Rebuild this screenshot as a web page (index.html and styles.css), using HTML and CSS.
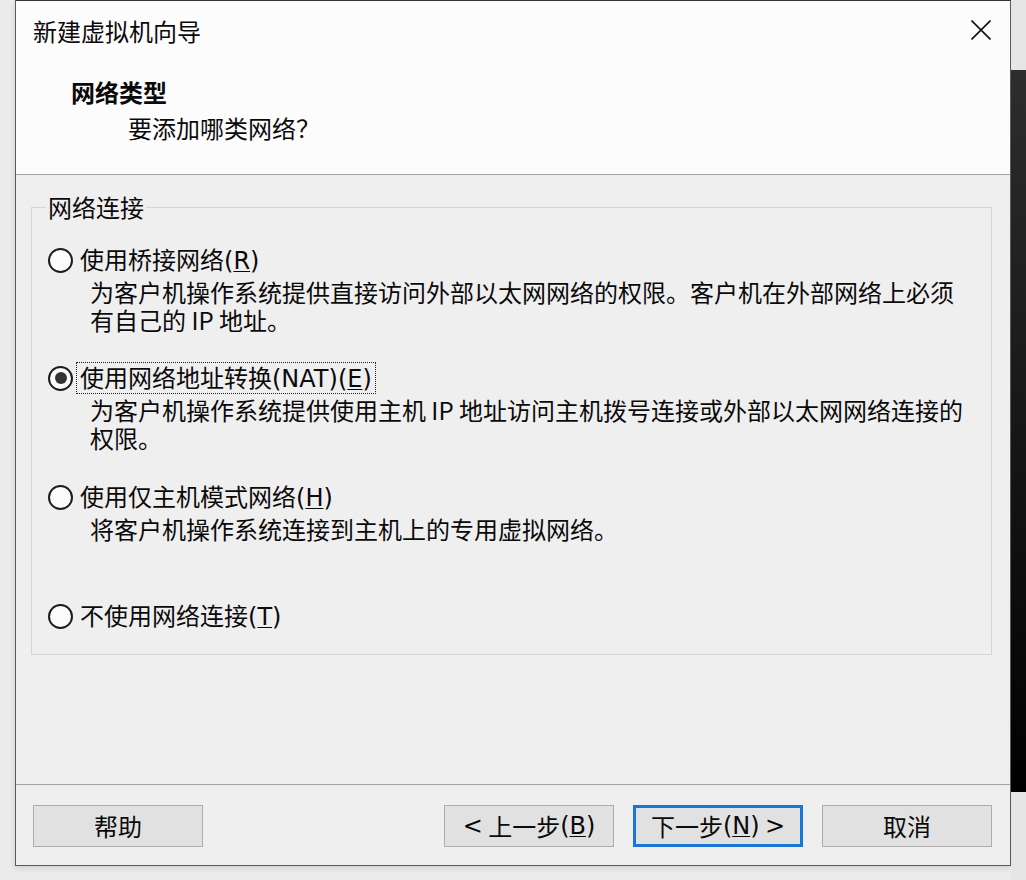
FILE: index.html
```html
<!DOCTYPE html>
<html lang="zh-CN">
<head>
<meta charset="utf-8">
<title>新建虚拟机向导</title>
<link rel="stylesheet" href="styles.css">
</head>
<body>
<div class="screen">
  <div class="window">
    <header class="head">
      <div class="titlebar">
        <span class="title">新建虚拟机向导</span>
        <svg class="close" width="20" height="20" viewBox="0 0 20 20"><path d="M0.5 0.5 L19.5 19.5 M19.5 0.5 L0.5 19.5" stroke="#111" stroke-width="1.6" fill="none"/></svg>
      </div>
      <div class="head-title">网络类型</div>
      <div class="head-sub">要添加哪类网络？</div>
    </header>
    <main class="content">
      <fieldset class="group">
        <legend>网络连接</legend>
        <div class="options">
          <div class="opt">
            <div class="opt-row"><span class="radio"></span><span class="lbl">使用桥接网络<span class="lat">(<u>R</u>)</span></span></div>
            <div class="desc">为客户机操作系统提供直接访问外部以太网网络的权限。客户机在外部网络上必须有自己的 IP 地址。</div>
          </div>
          <div class="opt">
            <div class="opt-row"><span class="radio checked"></span><span class="lbl focus">使用网络地址转换<span class="lat">(NAT)(<u>E</u>)</span></span></div>
            <div class="desc">为客户机操作系统提供使用主机 IP 地址访问主机拨号连接或外部以太网网络连接的权限。</div>
          </div>
          <div class="opt">
            <div class="opt-row"><span class="radio"></span><span class="lbl">使用仅主机模式网络<span class="lat">(<u>H</u>)</span></span></div>
            <div class="desc">将客户机操作系统连接到主机上的专用虚拟网络。</div>
          </div>
          <div class="opt">
            <div class="opt-row"><span class="radio"></span><span class="lbl">不使用网络连接<span class="lat">(<u>T</u>)</span></span></div>
          </div>
        </div>
      </fieldset>
    </main>
    <footer class="foot">
      <button class="btn">帮助</button>
      <div class="btn-group">
        <button class="btn"><span class="lat">&lt;</span>&nbsp;上一步<span class="lat">(<u>B</u>)</span></button>
        <button class="btn default">下一步<span class="lat">(<u>N</u>)</span>&nbsp;<span class="lat">&gt;</span></button>
        <button class="btn">取消</button>
      </div>
    </footer>
  </div>
  <div class="side"><div class="side-dark"></div></div>
</div>
</body>
</html>
```
FILE: styles.css
```css
* { box-sizing: border-box; }
html, body {
  margin: 0;
  padding: 0;
  background: #ebebeb;
  font-family: "Noto Sans CJK SC", "Noto Sans", sans-serif;
  color: #0a0a0a;
}
.lat {
  font-family: "DejaVu Sans", "Noto Sans CJK SC", sans-serif;
}
.screen {
  display: flex;
  width: 1026px;
  height: 880px;
  overflow: hidden;
}
.window {
  margin-left: 15px;
  width: 996px;
  height: 866px;
  border: 1px solid #5a5a5a;
  border-top-color: #333;
  background: #f0eff0;
  display: flex;
  flex-direction: column;
  box-shadow: 0 2px 6px rgba(0,0,0,0.12);
  flex: none;
}
.head {
  height: 174px;
  background: #fdfcfd;
  border-bottom: 1px solid #a3a3a3;
  padding: 18px 19px 0 17px;
  flex: none;
}
.titlebar {
  display: flex;
  justify-content: space-between;
  align-items: flex-start;
}
.title {
  font-size: 24px;
  line-height: 24px;
}
.close {
  margin-top: 1px;
  display: block;
}
.head-title {
  margin-top: 37px;
  margin-left: 38px;
  font-size: 24px;
  line-height: 24px;
  font-weight: 700;
}
.head-sub {
  margin-top: 12px;
  margin-left: 95px;
  font-size: 24px;
  line-height: 24px;
}
.content {
  height: 610px;
  flex: none;
  border-bottom: 1px solid #a3a3a3;
  padding-top: 20px;
}
.group {
  margin: 0 18px 0 15px;
  border: 1px solid #d6d5d6;
  padding: 0 0 24px 0;
  min-width: 0;
}
.group legend {
  margin-left: 14px;
  padding: 0 2px;
  font-size: 24px;
  line-height: 24px;
}
.options {
  padding-top: 27px;
  display: grid;
  grid-template-rows: 118px 119px 119px 28px;
}
.opt-row {
  display: flex;
  align-items: center;
  height: 28px;
  padding-left: 16px;
}
.radio {
  width: 25px;
  height: 25px;
  border: 2px solid #1c1c1c;
  border-radius: 50%;
  background: #fbfbfb;
  display: flex;
  align-items: center;
  justify-content: center;
  margin-right: 4px;
  flex: none;
}
.radio.checked::after {
  content: "";
  width: 12px;
  height: 12px;
  border-radius: 50%;
  background: #333;
}
.lbl {
  font-size: 24px;
  line-height: 28px;
  padding: 0 3px;
  white-space: nowrap;
}
.lbl.focus {
  outline: 1px dotted #222;
  outline-offset: 0;
}
u {
  text-decoration: underline;
  text-decoration-thickness: 1px;
  text-underline-offset: 2px;
}
.desc {
  margin-top: 4px;
  margin-left: 58px;
  width: 882px;
  font-size: 24px;
  line-height: 28px;
}
.foot {
  flex: 1;
  display: flex;
  align-items: flex-start;
  padding: 20px 18px 0 17px;
}
.btn-group {
  margin-left: auto;
  display: flex;
  gap: 19px;
}
.btn {
  width: 170px;
  height: 42px;
  border: 1px solid #adadad;
  background: #e1e1e1;
  font-family: "Noto Sans CJK SC", "Noto Sans", sans-serif;
  font-size: 24px;
  line-height: 28px;
  color: #0a0a0a;
  padding: 0;
  display: flex;
  align-items: center;
  justify-content: center;
}
.btn.default {
  border: 3px solid #1976d6;
}
.side {
  flex: 1;
  background: #e6e6e6;
}
.side-dark {
  margin-top: 70px;
  height: 722px;
  background: linear-gradient(#2d2d2d, #000);
}
```
